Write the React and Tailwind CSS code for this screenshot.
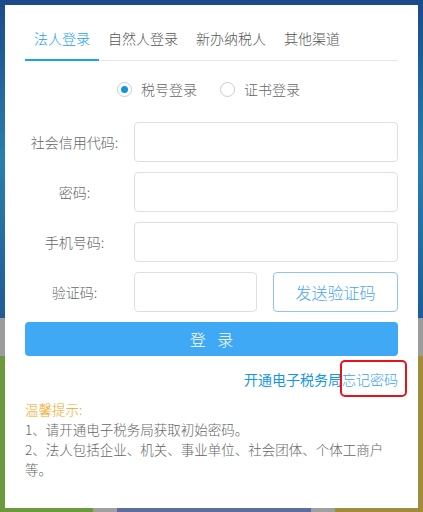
import React from "react";

const font = { fontFamily: '"Noto Sans CJK SC", "Noto Sans", sans-serif' };

function Row({ label, children }) {
  return (
    <div className="flex items-center h-[40px]">
      <div className="w-[99px] text-center text-[14px] text-[#666]">{label}</div>
      <div className="ml-[10px] flex-1 flex">{children}</div>
    </div>
  );
}

export default function App() {
  return (
    <div className="relative w-[423px] h-[512px] overflow-hidden font-light" style={font}>
      {/* background page */}
      <div className="flex flex-col h-full">
        <div className="h-[318px] bg-gradient-to-b from-[#1b4a8a] via-[#2a7fae] to-[#1f5c96]" />
        <div className="h-[38px] bg-[#9c9c9c]" />
        <div className="flex-1 flex">
          <div className="w-[93px] bg-[#6a9a3c]" />
          <div className="w-[24px] bg-[#a0a0a0]" />
          <div className="w-[194px] bg-[#5e6e9c]" />
          <div className="w-[24px] bg-[#a0a0a0]" />
          <div className="flex-1 bg-[#a08c3c]" />
        </div>
      </div>

      {/* modal */}
      <div className="absolute left-[5px] top-[5px] w-[413px] h-[503px] bg-white px-[20px] pt-[12px]">
        {/* tabs */}
        <div className="flex gap-[18px] border-b border-[#e4e7ed]">
          <div className="relative h-[43px] leading-[43px] px-[9px] -mr-[9px] text-[14px] text-[#1ba1f2]">
            法人登录
            <div className="absolute left-0 right-0 bottom-[-1px] h-[2px] bg-[#1ba1f2]" />
          </div>
          <div className="h-[43px] leading-[43px] text-[14px] text-[#555]">自然人登录</div>
          <div className="h-[43px] leading-[43px] text-[14px] text-[#555]">新办纳税人</div>
          <div className="h-[43px] leading-[43px] text-[14px] text-[#555]">其他渠道</div>
        </div>

        {/* radios */}
        <div className="mt-[17px] h-[22px] flex items-center justify-center gap-[23px] pr-[6px] text-[14px] text-[#666]">
          <div className="flex items-center gap-[9px]">
            <span className="w-[15px] h-[15px] rounded-full border border-[#c8cbd1] flex items-center justify-center">
              <span className="w-[7px] h-[7px] rounded-full bg-[#1296db]" />
            </span>
            <span>税号登录</span>
          </div>
          <div className="flex items-center gap-[9px]">
            <span className="w-[15px] h-[15px] rounded-full border border-[#c8cbd1]" />
            <span>证书登录</span>
          </div>
        </div>

        {/* form */}
        <div className="mt-[22px] flex flex-col gap-[10px]">
          <Row label="社会信用代码:">
            <div className="w-[264px] h-[40px] rounded-[4px] border border-[#dcdfe6]" />
          </Row>
          <Row label="密码:">
            <div className="w-[264px] h-[40px] rounded-[4px] border border-[#dcdfe6]" />
          </Row>
          <Row label="手机号码:">
            <div className="w-[264px] h-[40px] rounded-[4px] border border-[#dcdfe6]" />
          </Row>
          <Row label="验证码:">
            <div className="w-[123px] h-[40px] rounded-[4px] border border-[#dcdfe6]" />
            <div className="ml-[16px] w-[125px] h-[40px] rounded-[4px] border border-[#8cc6f2] flex items-center justify-center text-[16px] text-[#46a6f0]">
              发送验证码
            </div>
          </Row>
        </div>

        <div className="mt-[10px] h-[34px] rounded-[4px] bg-[#3fa9f5] flex items-center justify-center text-[16px] text-white tracking-[4px] pl-[4px]">
          登 录
        </div>

        <div className="mt-[13px] h-[20px] leading-[20px] flex justify-end text-[14px]">
          <span className="text-[#1296e8] font-normal">开通电子税务局</span>
          <span className="text-[#3aa5f2]">忘记密码</span>
        </div>

        <div className="mt-[10px] text-[13.5px] leading-[20px]">
          <div className="text-[#f5a623]">温馨提示:</div>
          <div className="text-[#666]">1、请开通电子税务局获取初始密码。</div>
          <div className="text-[#666]">
            2、法人包括企业、机关、事业单位、社会团体、个体工商户
            <br />
            等。
          </div>
        </div>

        {/* red highlight */}
        <div className="absolute left-[335px] top-[355px] w-[67px] h-[37px] rounded-[5px] border-2 border-[#e8131a]" />
      </div>
    </div>
  );
}
